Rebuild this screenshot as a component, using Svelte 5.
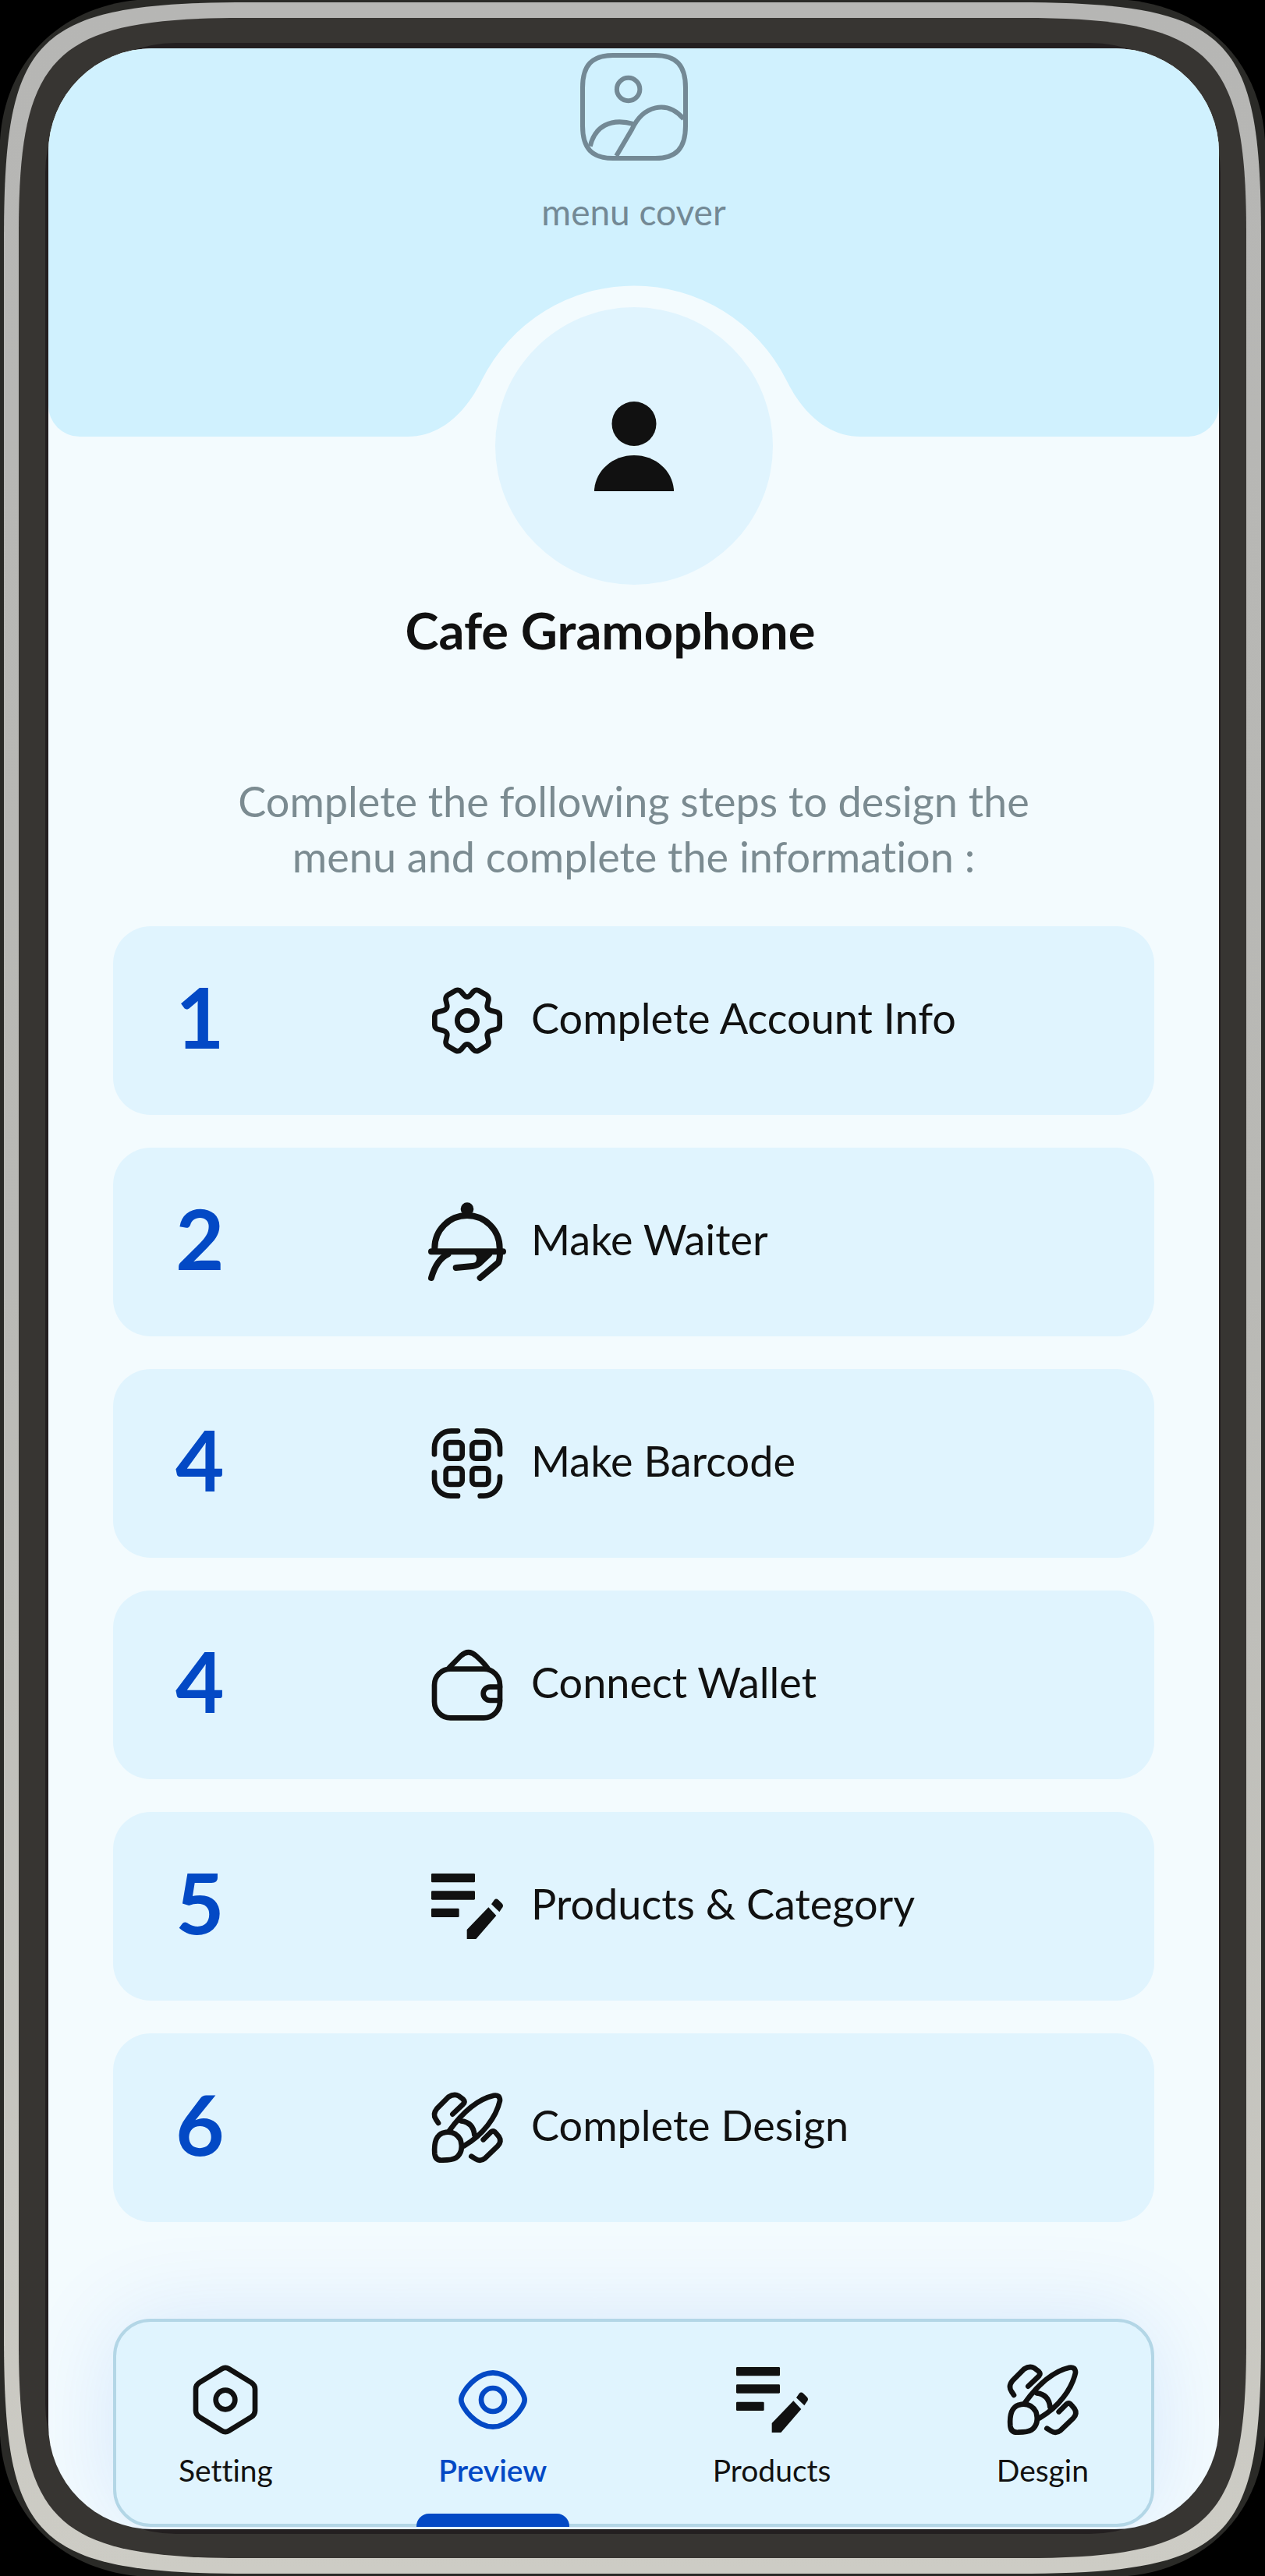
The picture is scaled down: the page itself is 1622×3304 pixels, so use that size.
<script>
  const steps = [
    { number: 1, label: 'Complete Account Info', icon: 'gear' },
    { number: 2, label: 'Make Waiter', icon: 'waiter' },
    { number: 4, label: 'Make Barcode', icon: 'barcode' },
    { number: 4, label: 'Connect Wallet', icon: 'wallet' },
    { number: 5, label: 'Products & Category', icon: 'list' },
    { number: 6, label: 'Complete Design', icon: 'brush' }
  ];

  const tabs = [
    { label: 'Setting', icon: 'hexagon' },
    { label: 'Preview', icon: 'eye', active: true },
    { label: 'Products', icon: 'list' },
    { label: 'Desgin', icon: 'brush' }
  ];

  const frames = {
    gear: '77 45 324 324',
    waiter: '76 897 324 324',
    barcode: '76 67 324 324',
    wallet: '76 917 324 324',
    list: '76 60 324 324',
    brush: '76 910 324 324',
    hexagon: '0 0 324 324',
    eye: '0 0 324 324'
  };
</script>

{#snippet icon(name)}
  <svg class="icon" viewBox={frames[name]} aria-hidden="true">
    {#if name === 'gear'}
      <path d="M226 108Q239 124 252 108L262 96Q271 86 283 91L312 108Q323 115 321 128L317 145Q312 164 332 169L350 173Q364 177 364 190V224Q364 237 350 241L332 245Q312 250 317 269L321 287Q323 300 312 306L283 323Q271 328 262 318L252 306Q239 290 226 306L216 318Q207 328 195 323L166 306Q155 300 157 287L161 269Q166 250 146 245L128 241Q114 237 114 224V190Q114 177 128 173L146 169Q166 164 161 145L157 128Q155 115 166 108L195 91Q207 86 216 96Z" />
      <circle cx="239" cy="207" r="38" />
    {:else if name === 'waiter'}
      <g class="heavy">
        <circle class="solid" cx="238" cy="932" r="25" />
        <path d="M113 1095V1082a125 125 0 0 1 250 0V1095M100 1096H376" />
        <path d="M100 1197C112 1155 130 1122 164 1106M195 1158L250 1153Q272 1151 284 1142L322 1106M288 1197L358 1138Q364 1125 364 1100" />
      </g>
      <path class="solid" d="M260 1104Q284 1114 268 1140L284 1146L334 1104Z" />
    {:else if name === 'barcode'}
      <path d="M112 194V168A64 64 0 0 1 176 104H202M276 104H302A62 62 0 0 1 364 166V194M112 264V292A62 62 0 0 0 174 354H202M288 354H302A62 62 0 0 0 364 292V280" />
      <rect x="156" y="148" width="63" height="62" rx="14" />
      <rect x="257" y="148" width="63" height="62" rx="14" />
      <rect x="156" y="248" width="63" height="62" rx="14" />
      <rect x="257" y="248" width="63" height="62" rx="14" />
    {:else if name === 'wallet'}
      <rect x="112" y="1018" width="252" height="188" rx="62" />
      <path d="M170 1012L213 968Q243 940 273 968Q300 992 316 1014M364 1087H326a26 26 0 0 0 0 52H364" />
    {:else if name === 'list'}
      <g class="solid">
        <rect x="100" y="96" width="168" height="34" rx="4" />
        <rect x="100" y="163" width="168" height="34" rx="4" />
        <rect x="100" y="230" width="107" height="34" rx="4" />
        <path d="M237 348V312L320 226L350 258L272 348ZM331 214L342 198Q349 190 358 197L373 212Q380 221 371 230L362 244Z" />
      </g>
    {:else if name === 'brush'}
      <path d="M127 1054L118 1040Q104 1020 122 998L166 954Q188 940 206 950L222 962Q232 972 222 982L182 1020" />
      <path d="M168 1085C215 1020 270 964 340 948Q364 944 364 968C350 1030 300 1100 226 1142M215 1046Q262 1052 266 1100" />
      <path d="M145 1092Q190 1080 212 1118Q226 1165 195 1188Q180 1197 145 1197Q116 1200 113 1172Q108 1105 145 1092Z" />
      <path d="M300 1118L330 1088Q340 1080 350 1094L360 1106Q372 1124 356 1142L306 1190Q288 1204 270 1192L254 1182" />
    {:else if name === 'hexagon'}
      <path d="M148 43Q162 34 176 43L262 96Q276 105 276 120V204Q276 219 262 228L176 281Q162 290 148 281L62 228Q48 219 48 204V120Q48 105 62 96Z" />
      <circle cx="162" cy="162" r="37" />
    {:else if name === 'eye'}
      <path d="M40 162C40 130 100 58 162 58S284 130 284 162S224 266 162 266S40 194 40 162Z" />
      <circle cx="162" cy="162" r="45" />
    {/if}
  </svg>
{/snippet}

<div class="phone">
  <svg class="frame" viewBox="0 0 1622 3304" preserveAspectRatio="none" aria-hidden="true">
    <defs>
      <linearGradient id="metal" x1="0" y1="0" x2="0" y2="1">
        <stop offset="0" stop-color="#b6b6b4" />
        <stop offset="0.5" stop-color="#b9b9b5" />
        <stop offset="1" stop-color="#cdccc5" />
      </linearGradient>
    </defs>
    <path fill="#2a2a27" d="M0 180C6 80 75 10 176 0H1446C1547 10 1616 80 1622 180V3124C1616 3224 1547 3294 1446 3304H176C75 3294 6 3224 0 3124Z" />
    <path fill="url(#metal)" d="M5 310C5 47 41 3 320 3H1302C1581 3 1617 47 1617 310V2994C1617 3257 1581 3301 1302 3301H320C41 3301 5 3257 5 2994Z" />
    <path fill="#373532" d="M24 300C24 72 67 23 310 23H1312C1555 23 1598 72 1598 300V3004C1598 3232 1555 3281 1312 3281H310C67 3281 24 3232 24 3004Z" />
    <rect fill="#231f20" x="58" y="55" width="1507" height="3195" rx="168" />
  </svg>

  <main class="screen">
    <header class="cover">
      <svg class="picture" viewBox="160 18 412 412" aria-hidden="true">
        <path d="M169 224V150C169 65 205 27 285 27H447C527 27 563 65 563 150V298C563 383 527 421 447 421H285C205 421 169 383 169 298Z" />
        <circle cx="344" cy="157" r="44" />
        <path d="M198 375C215 300 275 265 365 290M298 412L358 310C400 220 490 195 556 270" />
      </svg>
      <p class="cover-label">menu cover</p>
      <svg class="notch" viewBox="0 0 600 194" aria-hidden="true">
        <path d="M10 194C45 194 80 172 105 121A218 218 0 0 1 495 121C520 172 555 194 590 194Z" />
      </svg>
    </header>

    <div class="avatar">
      <svg class="person" viewBox="0 0 102 115" aria-hidden="true">
        <circle cx="51" cy="28.5" r="28.5" />
        <path d="M0 115V113C2 88 24 69 51 69S100 88 102 113V115Z" />
      </svg>
    </div>

    <h1>Cafe Gramophone</h1>
    <p class="intro">Complete the following steps to design the menu and complete the information :</p>

    <ol class="steps">
      {#each steps as step}
        <li>
          <button class="step">
            <span class="number">{step.number}</span>
            {@render icon(step.icon)}
            <span class="label">{step.label}</span>
          </button>
        </li>
      {/each}
    </ol>

    <nav class="tabs">
      {#each tabs as tab}
        <button class="tab" class:active={tab.active} aria-current={tab.active ? 'page' : undefined}>
          {@render icon(tab.icon)}
          <span>{tab.label}</span>
        </button>
      {/each}
    </nav>
  </main>
</div>

<style>
  :global(body) {
    margin: 0;
    background: #000;
  }

  .phone {
    position: relative;
    box-sizing: border-box;
    padding: 62px 59px 60px 62px;
    font-family: Lato, 'Open Sans', sans-serif;
    font-variant-ligatures: none;
    color: #111;
  }

  .frame {
    position: absolute;
    inset: 0;
    width: 100%;
    height: 100%;
  }

  .screen {
    position: relative;
    display: flex;
    flex-direction: column;
    align-items: center;
    padding-bottom: 3px;
    overflow: hidden;
    border-radius: 134px;
    background: #f3fbfe;
  }

  .cover {
    display: flex;
    flex-direction: column;
    align-items: center;
    box-sizing: border-box;
    width: 100%;
    padding-top: 6px;
    border-radius: 0 0 40px 40px;
    background: #d0f1fe;
    color: #738995;
  }

  .picture {
    width: 138px;
    height: 138px;
    fill: none;
    stroke: currentColor;
    stroke-width: 18;
  }

  .cover-label {
    margin: 36px 0 64px;
    font-size: 46px;
    line-height: 60px;
  }

  .notch {
    display: block;
    width: 600px;
    height: 194px;
    fill: #f3fbfe;
  }

  .avatar {
    display: flex;
    align-items: center;
    justify-content: center;
    width: 356px;
    height: 356px;
    margin-top: -166px;
    border-radius: 50%;
    background: #e0f4fe;
  }

  .person {
    width: 102px;
    height: 115px;
    fill: #111;
  }

  h1 {
    margin: 20px 0 0;
    padding-right: 60px;
    font-size: 65px;
    font-weight: 700;
    line-height: 76px;
  }

  .intro {
    width: 1100px;
    max-width: 90%;
    margin: 146px 0 54px;
    color: #7b8b91;
    font-size: 54px;
    line-height: 71px;
    text-align: center;
  }

  .steps {
    display: flex;
    flex-direction: column;
    gap: 42px;
    box-sizing: border-box;
    width: 100%;
    margin: 0;
    padding: 0 83px;
    list-style: none;
  }

  .step {
    display: grid;
    grid-template-columns: 320px 108px 1fr;
    align-items: center;
    box-sizing: border-box;
    width: 100%;
    height: 242px;
    padding: 0 80px;
    border: 0;
    border-radius: 48px;
    background: #e0f4fe;
    color: inherit;
    font: inherit;
    text-align: left;
  }

  .number {
    padding-bottom: 12px;
    color: #0349c5;
    font-size: 108px;
    font-weight: 700;
    line-height: 108px;
  }

  .label {
    padding: 0 0 6px 28px;
    font-size: 54px;
    line-height: 72px;
  }

  .icon {
    display: block;
    width: 108px;
    height: 108px;
    fill: none;
    stroke: currentColor;
    stroke-width: 20;
    stroke-linecap: round;
    stroke-linejoin: round;
  }

  .heavy {
    stroke-width: 24;
  }

  .solid {
    fill: currentColor;
    stroke: none;
  }

  .tabs {
    display: flex;
    justify-content: space-between;
    box-sizing: border-box;
    width: calc(100% - 166px);
    height: 267px;
    margin-top: 124px;
    padding: 0 80px;
    border: 4px solid #b3d6e6;
    border-radius: 48px;
    background: #e0f4fe;
    box-shadow: 0 0 120px rgba(20, 90, 240, 0.12);
  }

  .tab {
    position: relative;
    display: flex;
    flex-direction: column;
    align-items: center;
    gap: 10px;
    padding: 46px 0 0;
    border: 0;
    background: none;
    color: #111;
    font: inherit;
    font-size: 39px;
    line-height: 52px;
  }

  .tab.active {
    color: #0349c5;
    font-weight: 600;
  }

  .tab.active::after {
    position: absolute;
    bottom: -4px;
    left: 50%;
    width: 196px;
    height: 17px;
    border-radius: 16px 16px 0 0;
    background: #0349c5;
    content: '';
    transform: translateX(-50%);
  }
</style>
